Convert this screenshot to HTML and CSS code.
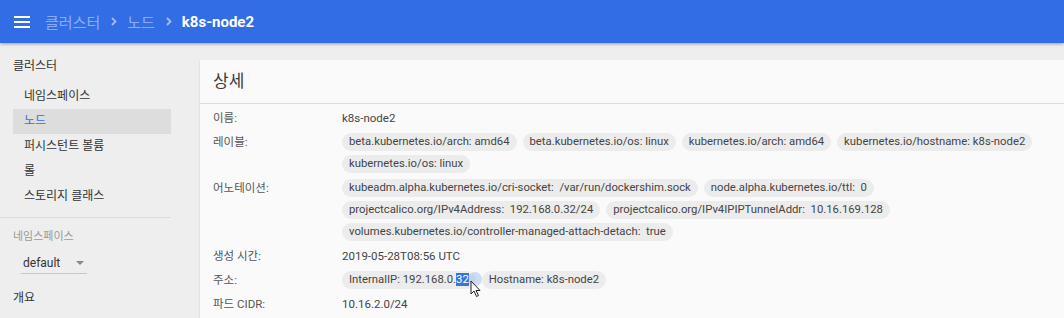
FILE: index.html
```html
<!DOCTYPE html>
<html lang="ko">

<head>
    <meta charset="UTF-8">
    <meta name="viewport" content="width=device-width, initial-scale=1.0">
    <title>k8s-node2 - 노드</title>
    <link rel="stylesheet" href="styles.css">
</head>

<body>
    <!-- 상단 툴바 -->
    <header class="toolbar">
        <svg class="menu-icon" width="16" height="12" viewBox="0 0 16 12">
            <rect x="0" y="0" width="16" height="2" fill="#fff"/>
            <rect x="0" y="5" width="16" height="2" fill="#fff"/>
            <rect x="0" y="10" width="16" height="2" fill="#fff"/>
        </svg>
        <nav class="breadcrumbs">
            <span class="crumb">클러스터</span>
            <svg class="chevron" width="6" height="9" viewBox="0 0 6 9">
                <path d="M1 1 L4.5 4.5 L1 8" fill="none" stroke="currentColor" stroke-width="1.8"/>
            </svg>
            <span class="crumb">노드</span>
            <svg class="chevron" width="6" height="9" viewBox="0 0 6 9">
                <path d="M1 1 L4.5 4.5 L1 8" fill="none" stroke="currentColor" stroke-width="1.8"/>
            </svg>
            <span class="crumb current">k8s-node2</span>
        </nav>
    </header>

    <div class="layout">
        <!-- 사이드 메뉴 -->
        <aside class="sidebar">
            <div class="nav-group">클러스터</div>
            <a class="nav-item">네임스페이스</a>
            <a class="nav-item active">노드</a>
            <a class="nav-item">퍼시스턴트 볼륨</a>
            <a class="nav-item">롤</a>
            <a class="nav-item">스토리지 클래스</a>
            <hr class="nav-divider">
            <div class="ns-label">네임스페이스</div>
            <div class="ns-select">
                <span>default</span>
                <span class="ns-arrow"></span>
            </div>
            <div class="nav-group overview">개요</div>
        </aside>

        <!-- 상세 카드 -->
        <main class="content">
            <section class="card">
                <div class="card-title">상세</div>
                <div class="detail-list">
                    <div class="detail-label">이름:</div>
                    <div class="detail-value">k8s-node2</div>

                    <div class="detail-label">레이블:</div>
                    <div class="chips">
                        <span class="chip">beta.kubernetes.io/arch: amd64</span>
                        <span class="chip">beta.kubernetes.io/os: linux</span>
                        <span class="chip">kubernetes.io/arch: amd64</span>
                        <span class="chip">kubernetes.io/hostname: k8s-node2</span>
                        <span class="chip">kubernetes.io/os: linux</span>
                    </div>

                    <div class="detail-label">어노테이션:</div>
                    <div class="chips">
                        <span class="chip">kubeadm.alpha.kubernetes.io/cri-socket:&nbsp; /var/run/dockershim.sock</span>
                        <span class="chip">node.alpha.kubernetes.io/ttl:&nbsp; 0</span>
                        <span class="chip">projectcalico.org/IPv4Address:&nbsp; 192.168.0.32/24</span>
                        <span class="chip">projectcalico.org/IPv4IPIPTunnelAddr:&nbsp; 10.16.169.128</span>
                        <span class="chip">volumes.kubernetes.io/controller-managed-attach-detach:&nbsp; true</span>
                    </div>

                    <div class="detail-label">생성 시간:</div>
                    <div class="detail-value">2019-05-28T08:56 UTC</div>

                    <div class="detail-label">주소:</div>
                    <div class="chips">
                        <span class="chip">InternalIP: 192.168.0.<span class="selected">32</span></span>
                        <span class="chip">Hostname: k8s-node2</span>
                    </div>

                    <div class="detail-label">파드 CIDR:</div>
                    <div class="detail-value">10.16.2.0/24</div>
                </div>
            </section>
        </main>
    </div>

    <!-- 마우스 커서 -->
    <div class="click-halo"></div>
    <svg class="cursor" width="12" height="18" viewBox="0 0 12 18">
        <path d="M1 1 L1 14 L4 11 L6.5 16.5 L8.5 15.5 L6 10.5 L10 10.5 Z" fill="#fff" stroke="#222" stroke-width="1"/>
    </svg>
</body>

</html>
```

FILE: styles.css
```css
body {
    margin: 0;
    background-color: #eeeeee;
    font-family: Roboto, "Noto Sans CJK KR", sans-serif;
    color: #333333;
    overflow: hidden;
}

.toolbar {
    height: 43px;
    background-color: #326de6;
    display: flex;
    align-items: center;
    padding-left: 14px;
    box-shadow: 0 1px 3px rgba(0, 0, 0, 0.35);
    position: relative;
    z-index: 1;
}

.menu-icon {
    margin-right: 15px;
}

.breadcrumbs {
    display: flex;
    align-items: center;
    font-size: 15px;
}

.crumb {
    color: rgba(255, 255, 255, 0.45);
}

.chevron {
    color: rgba(255, 255, 255, 0.55);
    margin: 0 10px 0 11px;
}

.crumb.current {
    color: #ffffff;
    font-weight: bold;
}

.layout {
    display: flex;
}

.sidebar {
    width: 171px;
    flex-shrink: 0;
    padding-top: 13px;
    font-size: 12px;
}

.nav-group {
    padding-left: 13px;
    height: 20px;
    line-height: 20px;
    margin-bottom: 8px;
    color: #333333;
}

.nav-item {
    display: block;
    margin-left: 13px;
    padding-left: 11px;
    height: 25px;
    line-height: 25px;
    color: #333333;
}

.nav-item.active {
    background-color: #dddddd;
    color: #326de6;
}

.nav-divider {
    border: none;
    border-top: 1px solid #dcdcdc;
    margin: 8px 0 9px 0;
}

.ns-label {
    padding-left: 13px;
    font-size: 11px;
    color: #999999;
    height: 20px;
    line-height: 20px;
}

.ns-select {
    margin: 5px 0 0 21px;
    width: 66px;
    height: 22px;
    display: flex;
    align-items: center;
    justify-content: space-between;
    padding: 0 0 0 2px;
    box-sizing: border-box;
    border-bottom: 1px solid #c8c8c8;
    font-size: 12px;
    color: #333333;
}

.ns-arrow {
    width: 0;
    height: 0;
    border-left: 4px solid transparent;
    border-right: 4px solid transparent;
    border-top: 4px solid #888888;
    margin-right: 3px;
}

.nav-group.overview {
    margin-top: 14px;
}

.content {
    flex: 1;
    padding: 17px 0 0 29px;
}

.card {
    background-color: #fafafa;
    box-shadow: 0 1px 2px rgba(0, 0, 0, 0.15);
    margin-right: -10px;
}

.card-title {
    height: 43px;
    line-height: 43px;
    padding-left: 13px;
    font-size: 17px;
    color: #3a3a3a;
    border-bottom: 1px solid #dddddd;
}

.detail-list {
    display: grid;
    grid-template-columns: 129px 1fr;
    row-gap: 2px;
    padding: 3px 23px 10px 13px;
    font-size: 11.5px;
}

.detail-label,
.detail-value {
    line-height: 22px;
    color: #444444;
}

.detail-label {
    color: #555555;
}

.chips {
    display: flex;
    flex-wrap: wrap;
    column-gap: 6px;
}

.chip {
    background-color: #ececec;
    border-radius: 9px;
    height: 18px;
    line-height: 18px;
    margin: 2px 0;
    padding: 0 7px;
    font-size: 11.3px;
    color: #444444;
    white-space: nowrap;
}

.selected {
    background-color: #3875d7;
    color: #ffffff;
}

.click-halo {
    position: absolute;
    left: 468px;
    top: 272px;
    width: 14px;
    height: 14px;
    border-radius: 50%;
    background-color: rgba(120, 170, 230, 0.35);
}

.cursor {
    position: absolute;
    left: 470px;
    top: 280px;
}
```
